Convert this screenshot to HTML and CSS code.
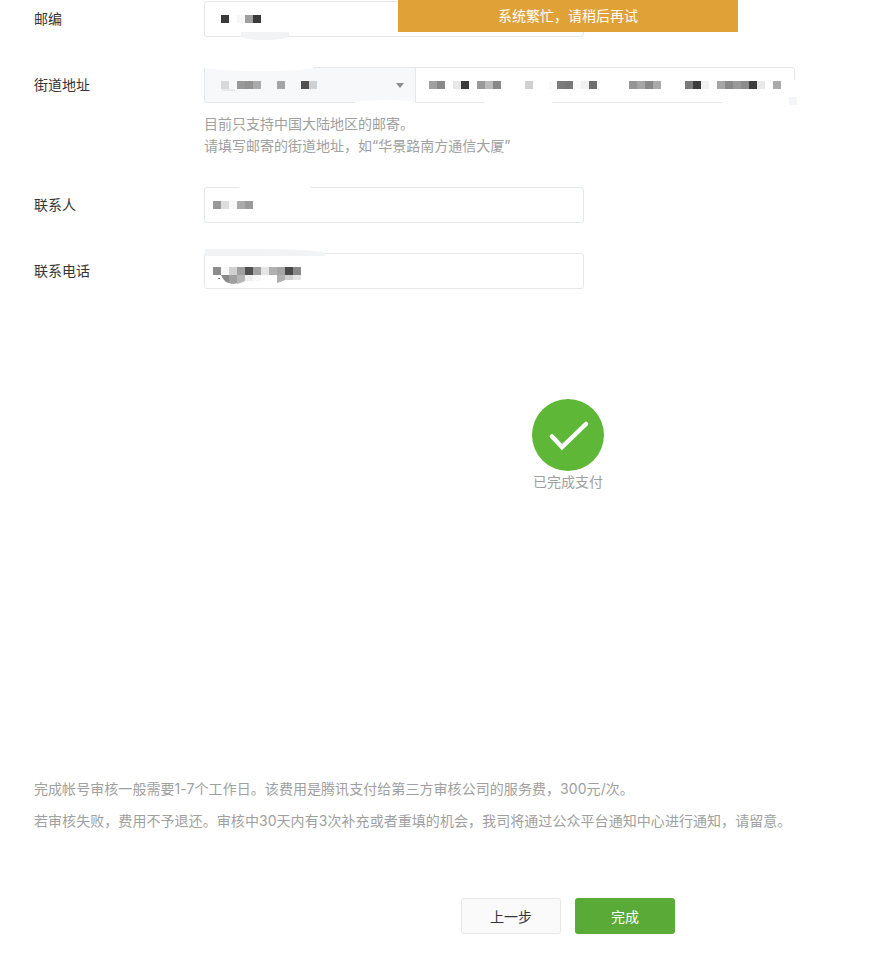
FILE: index.html
```html
<!DOCTYPE html>
<html lang="zh-CN">
  <head>
    <meta charset="UTF-8">
    <title>微信认证</title>
    <link rel="stylesheet" href="styles.css">
  </head>
  <body>
    <div class="toast">系统繁忙，请稍后再试</div>

    <div class="form">
      <div class="row">
        <label class="row-label">邮编</label>
        <div class="field">
          <svg class="mosaic" width="48" height="8">
            <rect x="0" width="8" height="8" fill="#3a3a3a"/>
            <rect x="16" width="8" height="8" fill="#f7f7f7"/>
            <rect x="24" width="8" height="8" fill="#a0a0a0"/>
            <rect x="32" width="8" height="8" fill="#3a3a3a"/>
          </svg>
          <span class="smear smear-zip"></span>
        </div>
      </div>

      <div class="row row-address">
        <label class="row-label">街道地址</label>
        <div class="select">
          <svg class="mosaic" width="96" height="8">
            <rect x="0" width="8" height="8" fill="#d8d8d8"/>
            <rect x="1" y="8" width="13" height="2" fill="#e8e8e8"/>
            <rect x="16" width="8" height="8" fill="#999"/>
            <rect x="24" width="8" height="8" fill="#939393"/>
            <rect x="32" width="8" height="8" fill="#aaa"/>
            <rect x="56" width="8" height="8" fill="#a5a5a5"/>
            <rect x="80" width="8" height="8" fill="#505050"/>
            <rect x="88" width="8" height="8" fill="#d0d0d0"/>
          </svg>
          <span class="caret"></span>
          <span class="smear smear-select-top"></span>
          <span class="smear smear-select-bottom"></span>
        </div>
        <div class="field field-street">
          <svg class="mosaic" width="352" height="8">
            <rect x="0" width="8" height="8" fill="#a0a0a0"/>
            <rect x="8" width="8" height="8" fill="#888"/>
            <rect x="24" width="8" height="8" fill="#e8e8e8"/>
            <rect x="32" width="8" height="8" fill="#3a3a3a"/>
            <rect x="48" width="8" height="8" fill="#999"/>
            <rect x="56" width="8" height="8" fill="#bbb"/>
            <rect x="64" width="8" height="8" fill="#888"/>
            <rect x="96" width="8" height="8" fill="#d0d0d0"/>
            <rect x="120" width="8" height="8" fill="#fafafa"/>
            <rect x="128" width="8" height="8" fill="#7b7b7b"/>
            <rect x="136" width="8" height="8" fill="#777"/>
            <rect x="144" width="8" height="8" fill="#f8f8f8"/>
            <rect x="152" width="8" height="8" fill="#f0f0f0"/>
            <rect x="160" width="8" height="8" fill="#6e6e6e"/>
            <rect x="200" width="8" height="8" fill="#959595"/>
            <rect x="208" width="8" height="8" fill="#a5a5a5"/>
            <rect x="216" width="8" height="8" fill="#888"/>
            <rect x="224" width="8" height="8" fill="#aaa"/>
            <rect x="256" width="8" height="8" fill="#7a7a7a"/>
            <rect x="264" width="8" height="8" fill="#3c3c3c"/>
            <rect x="272" width="8" height="8" fill="#f0f0f0"/>
            <rect x="288" width="8" height="8" fill="#a5a5a5"/>
            <rect x="296" width="8" height="8" fill="#888"/>
            <rect x="304" width="8" height="8" fill="#999"/>
            <rect x="312" width="8" height="8" fill="#8c8c8c"/>
            <rect x="320" width="8" height="8" fill="#3c3c3c"/>
            <rect x="328" width="8" height="8" fill="#e8e8e8"/>
            <rect x="344" width="8" height="8" fill="#aaa"/>
          </svg>
          <span class="smear smear-street-bottom"></span>
          <span class="smear smear-street-strip"></span>
          <span class="smear smear-street-end"></span>
          <span class="smear-dot"></span>
        </div>
      </div>
      <div class="help">
        <p>目前只支持中国大陆地区的邮寄。</p>
        <p>请填写邮寄的街道地址，如“华景路南方通信大厦”</p>
      </div>

      <div class="row">
        <label class="row-label">联系人</label>
        <div class="field field-short">
          <svg class="mosaic" width="40" height="8">
            <rect x="0" width="8" height="8" fill="#999"/>
            <rect x="8" width="8" height="8" fill="#ddd"/>
            <rect x="16" width="8" height="8" fill="#f8f8f8"/>
            <rect x="24" width="8" height="8" fill="#aaa"/>
            <rect x="32" width="8" height="8" fill="#9a9a9a"/>
          </svg>
          <span class="smear smear-contact"></span>
        </div>
      </div>

      <div class="row">
        <label class="row-label">联系电话</label>
        <div class="field field-short">
          <svg class="mosaic mosaic-tall" width="88" height="16">
            <rect x="0" width="8" height="8" fill="#8c8c8c"/>
            <rect x="8" width="8" height="8" fill="#f8f8f8"/>
            <rect x="16" width="8" height="8" fill="#d0d0d0"/>
            <rect x="24" width="8" height="8" fill="#a0a0a0"/>
            <rect x="32" width="8" height="8" fill="#505050"/>
            <rect x="40" width="8" height="8" fill="#a0a0a0"/>
            <rect x="48" width="8" height="8" fill="#e5e5e5"/>
            <rect x="56" width="8" height="8" fill="#b0b0b0"/>
            <rect x="64" width="8" height="8" fill="#a5a5a5"/>
            <rect x="72" width="8" height="8" fill="#4a4a4a"/>
            <rect x="80" width="8" height="8" fill="#888"/>
            <rect x="5" y="11" width="2" height="1" fill="#777"/>
            <path d="M8 8h8v8q-5-1-8-8z" fill="#888"/>
            <path d="M16 8h8v8q-4 2-8 0z" fill="#a0a0a0"/>
            <path d="M24 8h8v6q-4 2-8 3z" fill="#b5b5b5"/>
            <rect x="32" y="8" width="8" height="6" fill="#eee"/>
            <rect x="40" y="8" width="8" height="6" fill="#f8f8f8"/>
            <path d="M64 8h8v5q-4 2-8 3z" fill="#b0b0b0"/>
            <rect x="72" y="8" width="8" height="5" fill="#d0d0d0"/>
            <rect x="80" y="8" width="8" height="5" fill="#e5e5e5"/>
          </svg>
          <span class="smear smear-phone"></span>
        </div>
      </div>
    </div>

    <div class="status">
      <svg class="status-icon" width="72" height="72" viewBox="0 0 72 72">
        <circle cx="36" cy="36" r="36" fill="#5fb738"/>
        <path d="M20 37.500l10 10.500 24-23" fill="none" stroke="#fff" stroke-width="4.500" stroke-linecap="round" stroke-linejoin="miter"/>
      </svg>
      <div class="status-text">已完成支付</div>
    </div>

    <div class="notes">
      <p>完成帐号审核一般需要1-7个工作日。该费用是腾讯支付给第三方审核公司的服务费，300元/次。</p>
      <p>若审核失败，费用不予退还。审核中30天内有3次补充或者重填的机会，我司将通过公众平台通知中心进行通知，请留意。</p>
    </div>

    <div class="buttons">
      <button class="btn btn-default" type="button">上一步</button>
      <button class="btn btn-primary" type="button">完成</button>
    </div>
  </body>
</html>
```

FILE: styles.css
```css
body {
  margin: 0;
  background: #fff;
  color: #353535;
  font-family: Inter, "Noto Sans CJK SC", sans-serif;
  font-size: 14px;
  position: relative;
}

p {
  margin: 0;
}

/* --------------- Toast ----------------- */

.toast {
  position: absolute;
  top: 0;
  left: 398px;
  z-index: 10;
  width: 340px;
  height: 32px;
  line-height: 32px;
  background: #e0a237;
  color: #fff;
  text-align: center;
}

/* --------------- Form ----------------- */

.form {
  padding: 1px 0 0 34px;
}

.row {
  display: flex;
  height: 36px;
  margin-bottom: 30px;
}

.row-address {
  margin-bottom: 10px;
}

.row-label {
  width: 170px;
  line-height: 36px;
}

.field,
.select {
  position: relative;
  display: flex;
  align-items: center;
  box-sizing: border-box;
  height: 36px;
  border: 1px solid #e4e8eb;
  border-radius: 3px;
  padding-left: 16px;
  background: #fff;
}

.field {
  width: 380px;
}

.field-short {
  padding-left: 8px;
}

.select {
  width: 212px;
  justify-content: space-between;
  padding-right: 11px;
  background: #f6f8f9;
  border-radius: 3px 0 0 3px;
}

.field-street {
  width: 380px;
  margin-left: -1px;
  padding-left: 13px;
  border-radius: 0 3px 3px 0;
}

.mosaic {
  display: block;
  overflow: visible;
}

.mosaic-tall {
  margin-top: 8px;
}

.caret {
  width: 0;
  height: 0;
  border-left: 4px solid transparent;
  border-right: 4px solid transparent;
  border-top: 5px solid #8d8d8d;
}

.help {
  margin: 0 0 30px 170px;
  line-height: 22px;
  color: #a0a0a0;
}

/* white-out marks over the fields */

.smear {
  position: absolute;
  background: #fff;
  border-radius: 50%;
}

.smear-zip {
  left: 36px;
  top: 30px;
  width: 48px;
  height: 8px;
  background: #f1f3f5;
  border-radius: 0 0 50% 50%;
}

.smear-select-top {
  left: -1px;
  top: -4px;
  width: 110px;
  height: 7px;
}

.smear-select-bottom {
  left: 150px;
  top: 32px;
  width: 62px;
  height: 5px;
}

.smear-street-bottom {
  left: 68px;
  top: 31px;
  width: 68px;
  height: 8px;
}

.smear-street-strip {
  left: 306px;
  top: 33px;
  width: 72px;
  height: 5px;
  border-radius: 0;
}

.smear-street-end {
  right: -4px;
  top: 12px;
  width: 10px;
  height: 21px;
  border-radius: 0;
}

.smear-dot {
  position: absolute;
  right: -3px;
  top: 29px;
  width: 8px;
  height: 8px;
  background: #f4f5f8;
}

.smear-contact {
  left: 34px;
  top: -3px;
  width: 72px;
  height: 5px;
}

.smear-phone {
  left: 0;
  top: -5px;
  width: 120px;
  height: 7px;
  background: #f2f3f5;
  border-radius: 0 60% 0 0;
}

/* --------------- Status ----------------- */

.status {
  display: flex;
  flex-direction: column;
  align-items: center;
  padding-left: 245px;
  margin-top: 110px;
}

.status-icon {
  display: block;
}

.status-text {
  line-height: 22px;
  color: #a0a0a0;
}

/* --------------- Notes ----------------- */

.notes {
  margin: 285px 0 0 34px;
  color: #a0a0a0;
  line-height: 22px;
  letter-spacing: 0.06px;
}

.notes p {
  margin-bottom: 10px;
}

/* --------------- Buttons ----------------- */

.buttons {
  display: flex;
  gap: 14px;
  margin: 66px 0 0 461px;
}

.btn {
  box-sizing: border-box;
  width: 100px;
  height: 36px;
  border-radius: 3px;
  font: inherit;
  padding: 0;
}

.btn-default {
  background: #fafafa;
  border: 1px solid #e4e8eb;
  color: #353535;
}

.btn-primary {
  background: #5aaa38;
  border: none;
  color: #fff;
}
```
